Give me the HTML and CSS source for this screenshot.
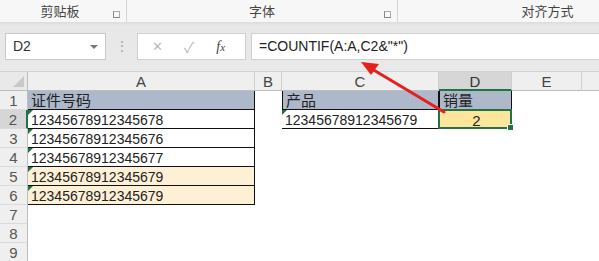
FILE: index.html
```html
<!DOCTYPE html>
<html lang="zh">
<head>
<meta charset="UTF-8" />
<title>COUNTIF</title>
<link rel="stylesheet" href="styles.css">
</head>
<body>
<div class="app">
  <!-- 功能区分组标题 -->
  <div class="ribbon">
    <div class="group g-clip">剪贴板<span class="launcher"></span></div>
    <div class="group g-font">字体<span class="launcher"></span></div>
    <div class="group g-align">对齐方式</div>
  </div>

  <!-- 编辑栏 -->
  <div class="formula-bar">
    <div class="name-box">D2<span class="caret"></span></div>
    <div class="dots">⋮</div>
    <div class="fx-buttons">
      <span class="btn-x">✕</span>
      <span class="btn-ok">✓</span>
      <span class="btn-fx"><i>f</i><i class="x">x</i></span>
    </div>
    <div class="formula">=COUNTIF(A:A,C2&amp;"*")</div>
  </div>

  <!-- 表格 -->
  <div class="sheet">
    <div class="corner"><span></span></div>
    <div class="col-h">A</div>
    <div class="col-h">B</div>
    <div class="col-h">C</div>
    <div class="col-h active">D</div>
    <div class="col-h">E</div>
    <div class="col-h last"></div>

    <div class="row-h">1</div>
    <div class="cell head bl">证件号码</div>
    <div class="cell"></div>
    <div class="cell head bl top">产品</div>
    <div class="cell head bl top">销量</div>
    <div class="cell"></div>
    <div class="cell"></div>

    <div class="row-h active">2</div>
    <div class="cell bl num">12345678912345678</div>
    <div class="cell"></div>
    <div class="cell bl num">12345678912345679</div>
    <div class="cell bl sel">2<span class="handle"></span></div>
    <div class="cell"></div>
    <div class="cell"></div>

    <div class="row-h">3</div>
    <div class="cell bl num">12345678912345676</div>
    <div class="cell"></div><div class="cell"></div><div class="cell"></div><div class="cell"></div><div class="cell"></div>

    <div class="row-h">4</div>
    <div class="cell bl num">12345678912345677</div>
    <div class="cell"></div><div class="cell"></div><div class="cell"></div><div class="cell"></div><div class="cell"></div>

    <div class="row-h">5</div>
    <div class="cell bl num hit">12345678912345679</div>
    <div class="cell"></div><div class="cell"></div><div class="cell"></div><div class="cell"></div><div class="cell"></div>

    <div class="row-h">6</div>
    <div class="cell bl num hit">12345678912345679</div>
    <div class="cell"></div><div class="cell"></div><div class="cell"></div><div class="cell"></div><div class="cell"></div>

    <div class="row-h">7</div>
    <div class="cell"></div><div class="cell"></div><div class="cell"></div><div class="cell"></div><div class="cell"></div><div class="cell"></div>
    <div class="row-h">8</div>
    <div class="cell"></div><div class="cell"></div><div class="cell"></div><div class="cell"></div><div class="cell"></div><div class="cell"></div>
    <div class="row-h">9</div>
    <div class="cell"></div><div class="cell"></div><div class="cell"></div><div class="cell"></div><div class="cell"></div><div class="cell"></div>
  </div>

  <!-- 红色箭头 -->
  <svg class="arrow" width="599" height="261" viewBox="0 0 599 261">
    <line x1="444" y1="112" x2="372" y2="69" stroke="#e5201e" stroke-width="3" stroke-linecap="round"/>
    <polygon points="361,62 379,64 371,75" fill="#e5201e"/>
  </svg>
</div>
</body>
</html>
```

FILE: styles.css
```css
/* 基本设置 */
html, body {
  margin: 0;
  padding: 0;
  background: #fff;
}
.app {
  position: relative;
  width: 599px;
  height: 261px;
  overflow: hidden;
  font-family: "Liberation Sans", "Noto Sans CJK SC", sans-serif;
  color: #222;
}

/* 功能区 */
.ribbon {
  display: flex;
  height: 22px;
  background: #f7f7f7;
  font-size: 13px;
  color: #444;
}
.group {
  position: relative;
  display: flex;
  align-items: center;
  justify-content: center;
  padding-bottom: 2px;
  box-sizing: border-box;
}
.g-clip { width: 127px; border-right: 1px solid #d6d6d6; padding-right: 6px; }
.g-font { width: 271px; border-right: 1px solid #d6d6d6; }
.g-align { flex: 1; padding-left: 98px; }
.launcher {
  position: absolute;
  right: 6px;
  top: 11px;
  width: 5px;
  height: 5px;
  border-left: 1px solid #888;
  border-bottom: 1px solid #888;
  border-top: 1px solid #aaa;
  border-right: 1px solid #aaa;
}

/* 编辑栏 */
.formula-bar {
  display: flex;
  align-items: flex-start;
  height: 49px;
  padding-top: 11px;
  box-sizing: border-box;
  background: linear-gradient(#dcdcdc, #e8e8e8 4px, #e9e9e9);
}
.name-box {
  position: relative;
  width: 101px;
  height: 27px;
  margin-left: 5px;
  box-sizing: border-box;
  background: #fff;
  border: 1px solid #c8c8c8;
  font-size: 14px;
  line-height: 25px;
  padding-left: 7px;
  color: #333;
}
.caret {
  position: absolute;
  right: 7px;
  top: 11px;
  border-left: 4px solid transparent;
  border-right: 4px solid transparent;
  border-top: 4px solid #777;
}
.dots {
  width: 31px;
  text-align: center;
  color: #aaa;
  font-size: 14px;
  line-height: 27px;
}
.fx-buttons {
  display: flex;
  align-items: center;
  width: 109px;
  height: 27px;
  box-sizing: border-box;
  background: #fff;
  border: 1px solid #d0d0d0;
  font-size: 14px;
}
.btn-x { margin-left: 14px; color: #bbb; font-size: 13px; }
.btn-ok { margin-left: 21px; color: #bbb; font-size: 15px; }
.btn-fx {
  margin-left: 22px;
  font-family: "Liberation Serif", serif;
  font-size: 14px;
  color: #444;
}
.btn-fx .x { font-size: 11px; }
.formula {
  flex: 1;
  height: 27px;
  margin-left: 5px;
  box-sizing: border-box;
  background: #fff;
  border: 1px solid #d0d0d0;
  border-right: 0;
  font-size: 14px;
  line-height: 25px;
  padding-left: 7px;
  color: #222;
}

/* 表格区域 */
.sheet {
  display: grid;
  grid-template-columns: 28px 227px 27px 157px 73px 70px 17px;
  grid-template-rows: 19px repeat(9, 19px);
  border-top: 1px solid #d4d4d4;
  background: #fff;
}
.corner {
  position: relative;
  background: #e9e9e9;
  border-right: 1px solid #bdbdbd;
  border-bottom: 1px solid #bdbdbd;
}
.corner span {
  position: absolute;
  right: 3px;
  bottom: 3px;
  border-left: 11px solid transparent;
  border-bottom: 11px solid #c8c8c8;
}
.col-h {
  background: #efefef;
  border-right: 1px solid #d0d0d0;
  border-bottom: 1px solid #bdbdbd;
  text-align: center;
  font-size: 15px;
  line-height: 20px;
  color: #444;
}
.col-h.active {
  background: #d6d6d6;
  border-bottom: 2px solid #217346;
  color: #333;
}
.col-h.last { border-right: 0; }
.row-h {
  background: #efefef;
  border-right: 1px solid #bdbdbd;
  border-bottom: 1px solid #dadada;
  text-align: center;
  font-size: 15px;
  line-height: 20px;
  color: #555;
}
.row-h.active {
  background: #d6d6d6;
  border-right: 2px solid #217346;
}

/* 单元格 */
.cell {
  position: relative;
  font-size: 14px;
  line-height: 20px;
  padding-left: 3px;
  white-space: nowrap;
}
.cell.bl {
  border-right: 1px solid #111;
  border-bottom: 1px solid #111;
}
.cell.bl.top { border-left: 1px solid #111; }
.cell.head { background: #adb9ca; color: #222; font-size: 15px; }
.cell.hit { background: #fdf0d5; }
.cell.num::before {
  content: "";
  position: absolute;
  left: 0;
  top: 0;
  border-top: 5px solid #1e7145;
  border-right: 5px solid transparent;
}
.cell.sel {
  background: #fee59c;
  text-align: center;
  font-size: 15px;
  border: 2px solid #217346;
  margin: -1px 0 0 -1px;
}
.handle {
  position: absolute;
  right: -4px;
  bottom: -4px;
  width: 5px;
  height: 5px;
  background: #217346;
  border: 1px solid #fff;
}

/* 箭头覆盖层 */
.arrow {
  position: absolute;
  left: 0;
  top: 0;
  pointer-events: none;
}
```
